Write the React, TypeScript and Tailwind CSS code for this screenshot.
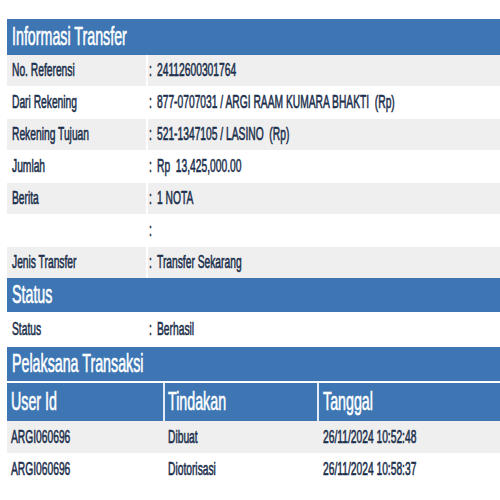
const FONT = "font-['Liberation_Sans',Arial,sans-serif]"

function T({ children, className = '' }: { children: React.ReactNode; className?: string }) {
  return (
    <span
      className={
        'inline-block origin-left scale-x-[0.57] whitespace-pre [-webkit-text-stroke:0.6px_currentColor] ' +
        className
      }
    >
      {children}
    </span>
  )
}

function Header({ title, className = '' }: { title: string; className?: string }) {
  return (
    <div className={'flex h-[34px] items-center bg-[#3d76b3] pl-[5px] text-[25px] text-white ' + className}>
      <T>{title}</T>
    </div>
  )
}

function Row({ label, value, gray }: { label: string; value: string; gray?: boolean }) {
  return (
    <div
      className={
        'grid h-[31px] grid-cols-[137px_1fr] items-center gap-x-[2px] text-[18px] text-[#1c2f4c] ' +
        (gray ? 'bg-[#efefef]' : 'bg-white')
      }
    >
      <div className="flex h-full items-center pl-[5px]">
        <T>{label}</T>
      </div>
      <div className="relative flex h-full items-center border-l-2 border-white pl-[1px]">
        <T>{':'}</T>
        <div className="absolute left-[9px]">
          <T>{value}</T>
        </div>
      </div>
    </div>
  )
}

const transferRows = [
  { label: 'No. Referensi', value: '24112600301764' },
  { label: 'Dari Rekening', value: '877-0707031 / ARGI RAAM KUMARA BHAKTI  (Rp)' },
  { label: 'Rekening Tujuan', value: '521-1347105 / LASINO  (Rp)' },
  { label: 'Jumlah', value: 'Rp  13,425,000.00' },
  { label: 'Berita', value: '1 NOTA' },
  { label: '', value: '' },
  { label: 'Jenis Transfer', value: 'Transfer Sekarang' },
]

const logs = [
  { user: 'ARGI060696', action: 'Dibuat', date: '26/11/2024 10:52:48' },
  { user: 'ARGI060696', action: 'Diotorisasi', date: '26/11/2024 10:58:37' },
]

export default function App() {
  return (
    <div className={'h-[500px] w-[500px] overflow-hidden bg-white pt-[19px] pl-[7px] ' + FONT}>
      <Header title="Informasi Transfer" className="h-[36px]" />
      <div className="flex flex-col gap-y-[1px]">
        {transferRows.map((r, i) => (
          <Row key={i} label={r.label} value={r.value} gray={i % 2 === 0} />
        ))}
      </div>
      <Header title="Status" />
      <div className="grid h-[35px] grid-cols-[137px_1fr] items-center gap-x-[2px] text-[18px] text-[#1c2f4c]">
        <div className="pl-[5px]">
          <T>Status</T>
        </div>
        <div className="relative flex items-center pl-[3px]">
          <T>{':'}</T>
          <div className="absolute left-[11px]">
            <T>Berhasil</T>
          </div>
        </div>
      </div>
      <Header title="Pelaksana Transaksi" />
      <div className="mt-[2px] grid h-[38px] grid-cols-[156px_152px_1fr] gap-x-[2px] bg-[#e4ecf5] text-[25px] text-white">
        <div className="flex items-center bg-[#3d76b3] pl-[4px]">
          <T>User Id</T>
        </div>
        <div className="flex items-center bg-[#3d76b3] pl-[3px]">
          <T>Tindakan</T>
        </div>
        <div className="flex items-center bg-[#3d76b3] pl-[4px]">
          <T>Tanggal</T>
        </div>
      </div>
      {logs.map((l, i) => (
        <div
          key={i}
          className={
            'grid h-[32px] grid-cols-[156px_152px_1fr] gap-x-[2px] text-[18px] text-[#1c2f4c] ' +
            (i === 0 ? 'bg-[#efefef]' : 'bg-white')
          }
        >
          <div className="flex items-center pl-[4px]">
            <T>{l.user}</T>
          </div>
          <div className="flex items-center pl-[3px]">
            <T>{l.action}</T>
          </div>
          <div className="flex items-center pl-[4px]">
            <T>{l.date}</T>
          </div>
        </div>
      ))}
    </div>
  )
}
